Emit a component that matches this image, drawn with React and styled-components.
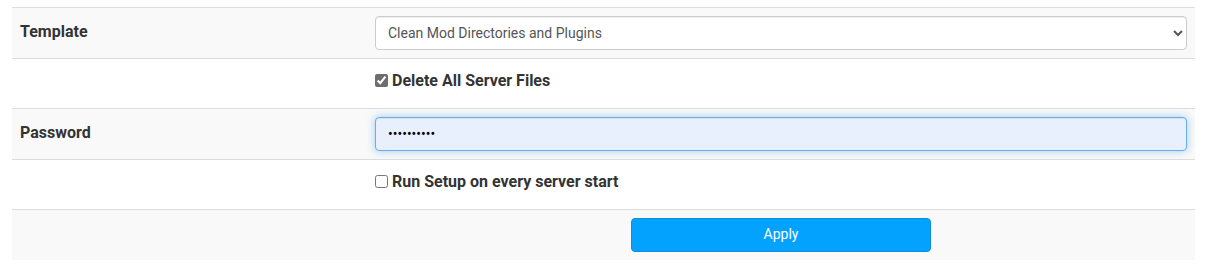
import React from 'react'
import styled, { createGlobalStyle } from 'styled-components'

const GlobalStyle = createGlobalStyle`
  body {
    margin: 0;
    background: #fff;
    font-family: Roboto, "Liberation Sans", Arial, sans-serif;
    color: #333;
  }
`

const Wrapper = styled.div`
  padding: 7px 13px 0 12px;
`

const Table = styled.table`
  width: 100%;
  border-collapse: collapse;
  border-spacing: 0;
`

const Row = styled.tr`
  background: ${(p) => (p.striped ? '#f9f9f9' : '#fff')};
  border-top: 1px solid #ddd;
`

const LabelCell = styled.td`
  width: 339px;
  padding: 14px 8px 7px;
  vertical-align: top;
  font-size: 16px;
  line-height: 20px;
  font-weight: 700;
  color: #333;
`

const FieldCell = styled.td`
  padding: 8px;
  vertical-align: top;
  text-align: ${(p) => (p.center ? 'center' : 'left')};
`

const Select = styled.select`
  display: block;
  width: 100%;
  height: 34px;
  padding: 6px 8px;
  font-family: Roboto, "Liberation Sans", Arial, sans-serif;
  font-size: 14px;
  color: #555;
  background: #fff;
  border: 1px solid #ccc;
  border-radius: 4px;
  box-shadow: inset 0 1px 1px rgba(0, 0, 0, 0.075);
  outline: none;
`

const PasswordInput = styled.input`
  display: block;
  box-sizing: border-box;
  width: 100%;
  height: 34px;
  padding: 6px 12px;
  font-family: Roboto, "Liberation Sans", Arial, sans-serif;
  font-size: 14px;
  color: #000;
  background: #e8f0fe;
  border: 1px solid #66afe9;
  border-radius: 4px;
  box-shadow: inset 0 1px 1px rgba(0, 0, 0, 0.075), 0 0 8px rgba(102, 175, 233, 0.6);
  outline: none;
`

const CheckLabel = styled.label`
  display: flex;
  align-items: center;
  height: 20px;
  margin: 3px 0 10px;
  font-size: 16px;
  font-weight: 700;
  color: #333;
`

const Check = styled.input`
  width: 13px;
  height: 13px;
  margin: 0 4px 0 0;
  accent-color: #6d6d6d;
`

const ApplyButton = styled.button`
  width: 300px;
  height: 34px;
  padding: 0 0 2px;
  font-family: Roboto, "Liberation Sans", Arial, sans-serif;
  font-size: 14px;
  color: #fff;
  background: #03a2fe;
  border: 1px solid #0a8fe0;
  border-radius: 4px;
  cursor: pointer;
`

function App() {
  return (
    <Wrapper>
      <GlobalStyle />
      <Table>
        <tbody>
          <Row striped>
            <LabelCell>Template</LabelCell>
            <FieldCell>
              <Select defaultValue="clean">
                <option value="clean">Clean Mod Directories and Plugins</option>
              </Select>
            </FieldCell>
          </Row>
          <Row>
            <LabelCell />
            <FieldCell>
              <CheckLabel>
                <Check type="checkbox" defaultChecked />
                Delete All Server Files
              </CheckLabel>
            </FieldCell>
          </Row>
          <Row striped>
            <LabelCell>Password</LabelCell>
            <FieldCell>
              <PasswordInput type="password" defaultValue="secret1234" />
            </FieldCell>
          </Row>
          <Row>
            <LabelCell />
            <FieldCell>
              <CheckLabel>
                <Check type="checkbox" />
                Run Setup on every server start
              </CheckLabel>
            </FieldCell>
          </Row>
          <Row striped>
            <LabelCell />
            <FieldCell center>
              <ApplyButton>Apply</ApplyButton>
            </FieldCell>
          </Row>
        </tbody>
      </Table>
    </Wrapper>
  )
}

export default App
